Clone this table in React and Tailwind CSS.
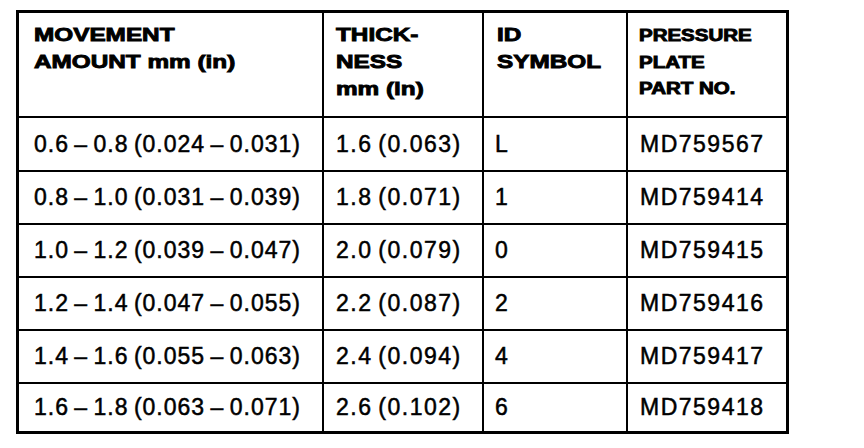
export default function App() {
  const rows = [
    ["0.6 – 0.8 (0.024 – 0.031)", "1.6 (0.063)", "L", "MD759567"],
    ["0.8 – 1.0 (0.031 – 0.039)", "1.8 (0.071)", "1", "MD759414"],
    ["1.0 – 1.2 (0.039 – 0.047)", "2.0 (0.079)", "0", "MD759415"],
    ["1.2 – 1.4 (0.047 – 0.055)", "2.2 (0.087)", "2", "MD759416"],
    ["1.4 – 1.6 (0.055 – 0.063)", "2.4 (0.094)", "4", "MD759417"],
    ["1.6 – 1.8 (0.063 – 0.071)", "2.6 (0.102)", "6", "MD759418"],
  ];
  const cellCls = [
    "pl-[15px] tracking-[1px] [word-spacing:-2px]",
    "pl-[12px] tracking-[1.5px] [word-spacing:-2px]",
    "pl-[11px] tracking-[1.5px]",
    "pl-[12px] tracking-[1.5px]",
  ];
  const H = ({ children }) => (
    <div className="block whitespace-nowrap">
      <span className="inline-block origin-left scale-x-[1.28] [-webkit-text-stroke:0.9px_black]">{children}</span>
    </div>
  );
  return (
    <div className="w-[864px] h-[448px] bg-white overflow-hidden pt-[10px] pl-[16px]" style={{ fontFamily: '"Liberation Sans", Arial, sans-serif' }}>
      <div className="grid w-[773px] grid-cols-[303px_158px_142px_158px] grid-rows-[103px_52px_51px_51px_51px_51px_47px] gap-[2px] bg-black border-[3px] border-black text-black">
        <div className="bg-white pl-[15px] pt-[8px] text-[19px] leading-[27px] font-bold">
          <H>MOVEMENT</H>
          <H>AMOUNT mm (in)</H>
        </div>
        <div className="bg-white pl-[12px] pt-[8px] text-[19px] leading-[27px] font-bold">
          <H>THICK-</H>
          <H>NESS</H>
          <H>mm (ln)</H>
        </div>
        <div className="bg-white pl-[13px] pt-[8px] text-[19px] leading-[27px] font-bold">
          <H>ID</H>
          <H>SYMBOL</H>
        </div>
        <div className="bg-white pl-[11px] pt-[10px] text-[16px] leading-[26.5px] font-bold">
          <H>PRESSURE</H>
          <H>PLATE</H>
          <H>PART NO.</H>
        </div>
        {rows.map((r, i) =>
          r.map((c, j) => (
            <div
              key={i + "-" + j}
              className={`bg-white flex items-center ${cellCls[j]} text-[23px] whitespace-nowrap [-webkit-text-stroke:0.5px_black]`}
            >
              {c}
            </div>
          ))
        )}
      </div>
    </div>
  );
}
